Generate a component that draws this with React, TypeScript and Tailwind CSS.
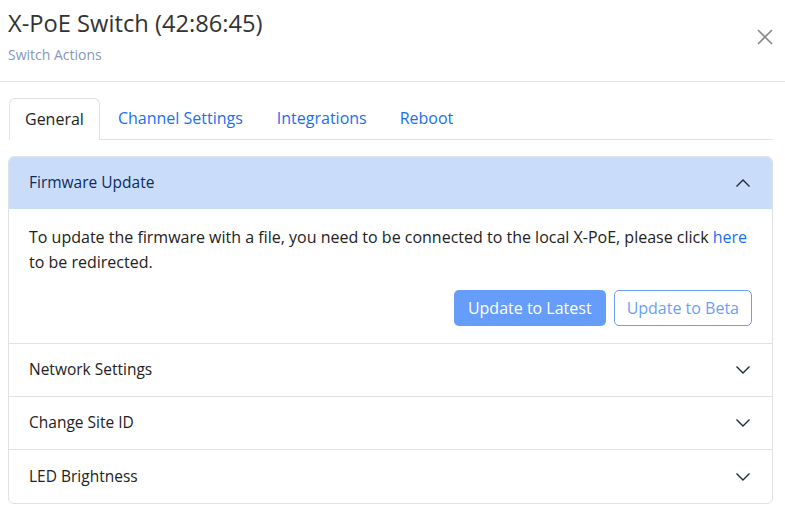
import React from "react";

const Chevron = ({ up }: { up?: boolean }) => (
  <svg width="16" height="16" viewBox="0 0 16 16" fill="none" className="text-[#1f2a3d]">
    {up ? (
      <path d="M1.5 11.5 L8 5 L14.5 11.5" stroke="currentColor" strokeWidth="1.4" />
    ) : (
      <path d="M1.5 4.5 L8 11 L14.5 4.5" stroke="currentColor" strokeWidth="1.4" />
    )}
  </svg>
);

export default function App() {
  const font = { fontFamily: '"Open Sans", sans-serif' };
  const rows = ["Network Settings", "Change Site ID", "LED Brightness"];
  return (
    <div className="w-[785px] h-[512px] bg-white overflow-hidden" style={font}>
      <div className="h-[82px] border-b border-[#dee2e6] flex items-start justify-between pl-2 pr-3">
        <div className="pt-[9px]">
          <div className="text-[23.7px] leading-[29px] text-[#333]">X-PoE Switch (42:86:45)</div>
          <div className="text-[14px] leading-[19px] mt-[7px] text-[#8597bd]">Switch Actions</div>
        </div>
        <button className="mt-[29px] text-[#888]">
          <svg width="16" height="16" viewBox="0 0 16 16">
            <path d="M1 1 L15 15 M15 1 L1 15" stroke="currentColor" strokeWidth="1.6" />
          </svg>
        </button>
      </div>
      <div className="pl-2 pr-3 pt-4">
        <div className="flex border-b border-[#dee2e6] ml-px text-[16px] leading-[24px]">
          <div className="px-[15px] py-[8px] border border-[#dee2e6] border-b-white -mb-px rounded-t-[6px] text-[#222] bg-white">General</div>
          <div className="px-[18px] py-[8px] text-[#1a6ef5]">Channel Settings</div>
          <div className="px-[16px] py-[8px] text-[#1a6ef5]">Integrations</div>
          <div className="px-[17px] py-[8px] text-[#1a6ef5]">Reboot</div>
        </div>
        <div className="mt-[16px] border border-[#dee2e6] rounded-[6px] overflow-hidden">
          <div className="h-[52px] bg-[#c9ddfb] flex items-center justify-between pl-5 pr-[21px]">
            <span className="text-[15.5px] text-[#0c2c5e]">Firmware Update</span>
            <Chevron up />
          </div>
          <div className="px-5 pt-4 pb-[17px] border-b border-[#dee2e6] text-[16px] leading-[25px] text-[#222]">
            <p>
              To update the firmware with a file, you need to be connected to the local X-PoE, please click{" "}
              <a className="text-[#1a6ef5]">here</a> to be redirected.
            </p>
            <div className="flex justify-end gap-2 mt-[15px]">
              <button className="h-[36px] px-[14px] rounded-[5px] bg-[#669cfa] text-white text-[16px]">Update to Latest</button>
              <button className="h-[36px] px-[12px] rounded-[5px] border border-[#6a9ff8] text-[#6a9ff8] text-[16px]">Update to Beta</button>
            </div>
          </div>
          {rows.map((r, i) => (
            <div
              key={r}
              className={`h-[53px] flex items-center justify-between pl-5 pr-[21px] ${i < rows.length - 1 ? "border-b border-[#dee2e6]" : ""}`}
            >
              <span className="text-[15.5px] text-[#222]">{r}</span>
              <Chevron />
            </div>
          ))}
        </div>
      </div>
    </div>
  );
}
